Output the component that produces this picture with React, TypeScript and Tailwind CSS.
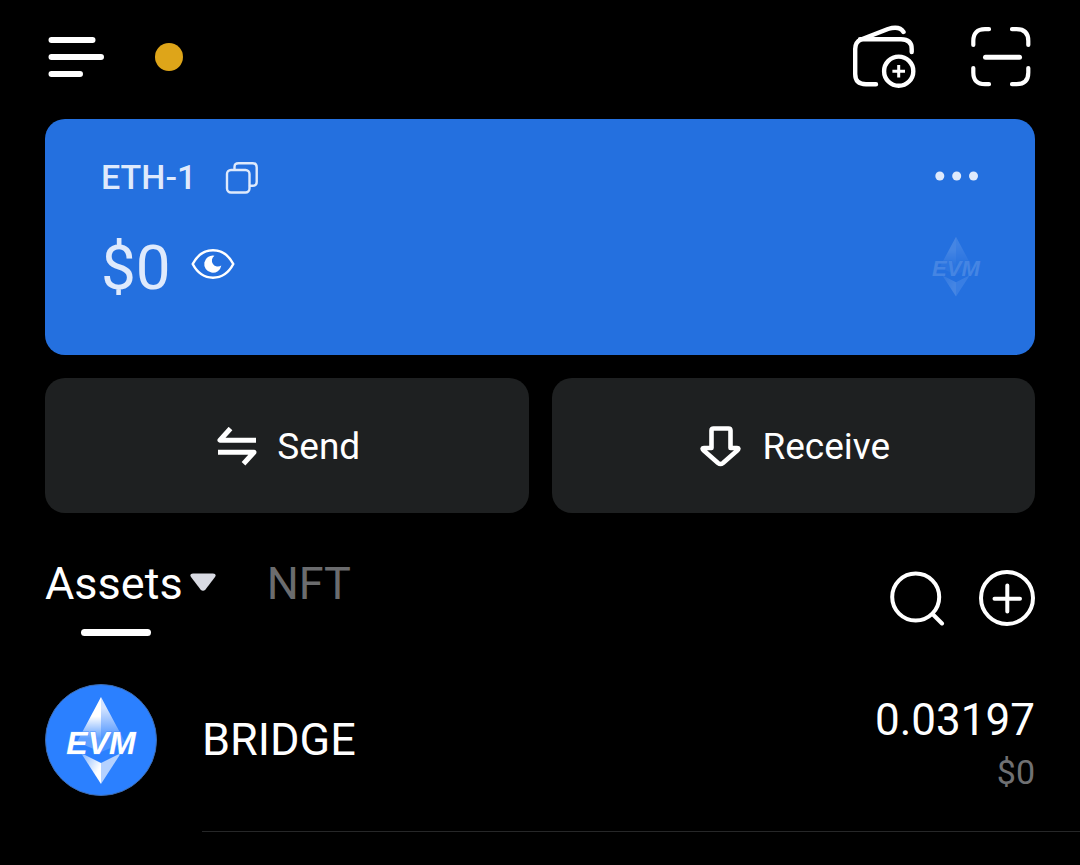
import React, { useState } from 'react';

interface Asset {
  name: string;
  amount: string;
  value: string;
}

const assets: Asset[] = [{ name: 'BRIDGE', amount: '0.03197', value: '$0' }];

const MenuIcon = () => (
  <svg viewBox="0 0 56 40" className="w-14 h-10" fill="none" stroke="currentColor" strokeWidth="6" strokeLinecap="round">
    <path d="M3.5 3H44.5M3.5 20H53M3.5 37H32" />
  </svg>
);

const WalletAddIcon = () => (
  <svg viewBox="0 0 64 64" className="w-16 h-16" fill="none" stroke="currentColor" strokeWidth="4.4" strokeLinecap="round" strokeLinejoin="round">
    <path d="M24 59.2H14Q3.2 59.2 3.2 49V24Q3.2 17 9 14.5L36 4Q47.5 0.5 51.5 7" />
    <path d="M8 14.3H49Q59.7 14.3 59.7 24V27" />
    <circle cx="46.7" cy="46.2" r="14.6" />
    <path d="M40.4 46.2H53M46.7 39.9V52.5" strokeWidth="3" strokeLinecap="butt" />
  </svg>
);

const ScanIcon = () => (
  <svg viewBox="0 0 62 62" className="w-[62px] h-[62px]" fill="none" stroke="currentColor" strokeWidth="4.2" strokeLinecap="round">
    <path d="M19 3.2H15Q3.3 3.2 3.3 15V19M42 3.2H46.5Q58.3 3.2 58.3 15V19M19 58.2H15Q3.3 58.2 3.3 46.5V42M42 58.2H46.5Q58.3 58.2 58.3 46.5V42" />
    <path d="M15.5 31.3H49.5" strokeWidth="5" />
  </svg>
);

const CopyIcon = () => (
  <svg viewBox="0 0 34 34" className="w-[34px] h-[34px]" fill="none" stroke="currentColor" strokeWidth="2.4" strokeLinejoin="round" strokeLinecap="round">
    <rect x="2" y="10" width="22.5" height="22.5" rx="4" />
    <path d="M9.5 9.5V7Q9.5 3.2 13.5 3.2H27.5Q31.7 3.2 31.7 7.5V22Q31.7 25.8 27.5 25.8H25" />
  </svg>
);

const EyeIcon = () => (
  <svg viewBox="0 0 46 32" className="w-11 h-8" fill="none" stroke="currentColor" strokeWidth="2.6">
    <path d="M1.8 16C6 8 13.5 1.7 23 1.7S40 8 44.2 16C40 24 32.5 30.3 23 30.3S6 24 1.8 16Z" strokeLinejoin="round" />
    <path d="M24.5 7.3A9 9 0 1 0 31.7 17.6A5.2 5.2 0 0 1 24.5 7.3Z" fill="currentColor" stroke="none" />
  </svg>
);

const MoreIcon = () => (
  <svg viewBox="0 0 44 10" className="w-11 h-2.5" fill="currentColor">
    <circle cx="4.8" cy="5" r="4.5" />
    <circle cx="21.7" cy="5" r="4.5" />
    <circle cx="38.5" cy="5" r="4.5" />
  </svg>
);

const SendIcon = () => (
  <svg viewBox="0 0 40 40" className="w-10 h-10" fill="none" stroke="currentColor" strokeWidth="5" strokeLinejoin="round">
    <path d="M13.5 1.5L3 13.2H39M1 25.3H37L26.5 36.8" />
  </svg>
);

const ReceiveIcon = () => (
  <svg viewBox="0 0 42 42" className="w-[42px] h-[42px]" fill="none" stroke="currentColor" strokeWidth="4.6" strokeLinejoin="round">
    <path d="M13.5 2.5H28.5Q30.5 2.5 30.5 4.5V22H37Q39.5 22 37.5 24.2L23 37Q20.5 39 18 37L3.5 24.2Q1.5 22 4 22H11.5V4.5Q11.5 2.5 13.5 2.5Z" />
  </svg>
);

const SearchIcon = () => (
  <svg viewBox="0 0 56 56" className="w-14 h-14" fill="none" stroke="currentColor" strokeWidth="4" strokeLinecap="round">
    <circle cx="26.7" cy="27" r="23.5" />
    <path d="M44 44.5L53 53.5" />
  </svg>
);

const PlusCircleIcon = () => (
  <svg viewBox="0 0 56 56" className="w-14 h-14" fill="none" stroke="currentColor" strokeWidth="4" strokeLinecap="round">
    <circle cx="28" cy="28" r="26" />
    <path d="M15.5 28.7H41M28.3 15.5V41.5" />
  </svg>
);

const EvmGlyph = ({ id, outline }: { id: string; outline: string }) => (
  <>
    <defs>
      <linearGradient id={`${id}-left`} x1="0" y1="0" x2="0" y2="1">
        <stop offset="0.35" stopColor="#fff" />
        <stop offset="0.75" stopColor="#fff" stopOpacity="0.25" />
      </linearGradient>
      <linearGradient id={`${id}-right`} x1="0" y1="0" x2="0" y2="1">
        <stop offset="0.2" stopColor="#d3e3ff" />
        <stop offset="0.75" stopColor="#d3e3ff" stopOpacity="0.2" />
      </linearGradient>
      <linearGradient id={`${id}-base`} x1="0" y1="0" x2="1" y2="0.8">
        <stop offset="0" stopColor="#fff" stopOpacity="0.4" />
        <stop offset="0.8" stopColor="#fff" />
      </linearGradient>
    </defs>
    <path d="M56 13L32 58L56 68Z" fill={`url(#${id}-left)`} />
    <path d="M56 13L80 58L56 68Z" fill={`url(#${id}-right)`} />
    <path d="M36 69L56 79V100Z" fill={`url(#${id}-base)`} />
    <path d="M76 69L56 79V100Z" fill="#b4d1ff" />
    <text
      x="56"
      y="70"
      textAnchor="middle"
      fill="#fff"
      stroke={outline}
      strokeWidth="1"
      paintOrder="stroke"
      className="font-['Liberation_Sans',sans-serif] text-[32px] font-bold italic"
    >
      EVM
    </text>
  </>
);

const AssetRow = ({ asset }: { asset: Asset }) => (
  <li className="flex gap-[45px] pl-[45px]">
    <svg viewBox="0 0 112 112" className="w-28 h-28 shrink-0">
      <circle cx="56" cy="56" r="55.5" fill="#2b80ff" stroke="#3d6bb0" />
      <EvmGlyph id="token" outline="#4b93ff" />
    </svg>
    <div className="flex-1 border-b border-[#262728] pb-[35px]">
      <div className="flex h-28 justify-between pr-[45px]">
        <span className="self-center text-[45px]">{asset.name}</span>
        <div className="flex flex-col items-end pt-[10px] leading-[52px]">
          <span className="text-[44px]">{asset.amount}</span>
          <span className="text-[34px] text-[#707173]">{asset.value}</span>
        </div>
      </div>
    </div>
  </li>
);

export default function App() {
  const [tab, setTab] = useState<'assets' | 'nft'>('assets');
  const [hidden, setHidden] = useState(false);

  return (
    <div className="min-h-screen bg-black font-['Roboto',sans-serif] text-white">
      <header className="flex h-[114px] items-center px-12">
        <button type="button" aria-label="Menu">
          <MenuIcon />
        </button>
        <span className="ml-[51px] size-7 rounded-full bg-[#dea519]" />
        <div className="ml-auto flex items-center gap-[54px]">
          <button type="button" aria-label="Add wallet">
            <WalletAddIcon />
          </button>
          <button type="button" aria-label="Scan">
            <ScanIcon />
          </button>
        </div>
      </header>

      <main className="pt-[5px]">
        {/* Wallet card */}
        <section className="mx-[45px] rounded-[20px] bg-[#2470df] pt-[38px] pr-[54px] pb-14 pl-14 text-[#dfeafc]">
          <div className="flex h-10 items-center">
            <h1 className="text-[34px] font-medium">ETH-1</h1>
            <button type="button" aria-label="Copy address" className="ml-[29px]">
              <CopyIcon />
            </button>
            <button type="button" aria-label="More" className="mr-0.5 ml-auto pb-0.5">
              <MoreIcon />
            </button>
          </div>
          <div className="mt-[38px] flex h-16 items-center">
            <span className="text-[62px]">{hidden ? '***' : '$0'}</span>
            <button type="button" aria-label="Toggle balance" className="ml-5 pb-1.5 text-white" onClick={() => setHidden(!hidden)}>
              <EyeIcon />
            </button>
            <svg viewBox="20 12 72 90" className="ml-auto w-[50px] h-[62px] opacity-15">
              <EvmGlyph id="card" outline="#2470df" />
            </svg>
          </div>
        </section>

        {/* Actions */}
        <div className="mx-[45px] mt-[23px] grid grid-cols-2 gap-[23px] text-[37px]">
          <button type="button" className="flex h-[135px] items-center justify-center gap-5 rounded-[20px] bg-[#1e2021] pt-0.5 pl-1">
            <SendIcon />
            Send
          </button>
          <button type="button" className="flex h-[135px] items-center justify-center gap-5 rounded-[20px] bg-[#1e2021] pt-0.5 pl-1">
            <ReceiveIcon />
            Receive
          </button>
        </div>

        {/* Tabs */}
        <div className="mx-[45px] mt-[45px] flex items-center justify-between">
          <div className="flex items-start gap-[51px] text-[45px] leading-[52px]">
            <button type="button" onClick={() => setTab('assets')} className={tab === 'assets' ? 'text-white' : 'text-[#6b6c6e]'}>
              <span className="flex items-start gap-[7px]">
                Assets
                <svg viewBox="0 0 26 18" className="mt-[15px] w-[26px] h-[18px]" fill="#d8dae2">
                  <path d="M3 0.5H23Q27 1 25 4L15.5 16.5Q13 19 10.5 16.5L1 4Q-1 1 3 0.5Z" />
                </svg>
              </span>
              {tab === 'assets' && <span className="mt-[19px] ml-9 block h-[7px] w-[70px] rounded-full bg-white" />}
            </button>
            <button type="button" onClick={() => setTab('nft')} className={tab === 'nft' ? 'text-white' : 'text-[#6b6c6e]'}>
              NFT
            </button>
          </div>
          <div className="flex items-center gap-[34px] pt-0.5">
            <button type="button" aria-label="Search">
              <SearchIcon />
            </button>
            <button type="button" aria-label="Add asset">
              <PlusCircleIcon />
            </button>
          </div>
        </div>

        <ul className="mt-12">
          {assets.map(asset => (
            <AssetRow key={asset.name} asset={asset} />
          ))}
        </ul>
      </main>
    </div>
  );
}
